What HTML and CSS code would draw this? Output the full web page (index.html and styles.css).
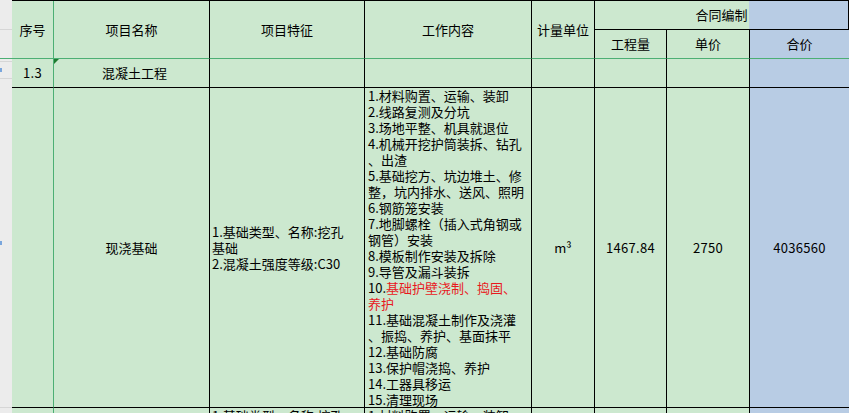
FILE: index.html
```html
<!DOCTYPE html>
<html lang="zh-CN">
<head>
<meta charset="utf-8">
<title>清单</title>
<link rel="stylesheet" href="styles.css">
</head>
<body>
<div class="page">
  <div class="strip">
    <div class="seg s1"></div>
    <div class="seg s2"></div>
    <div class="seg s3"></div>
    <div class="seg s4"><span class="tick"></span></div>
    <div class="seg s5"><span class="tick"></span></div>
    <div class="seg s6"></div>
  </div>
  <div class="sheet">
    <div class="c h1 col1 freeze-b">序号</div>
    <div class="c h1">项目名称</div>
    <div class="c h1">项目特征</div>
    <div class="c h1">工作内容</div>
    <div class="c h1">计量单位</div>
    <div class="c merged">合同编制</div>
    <div class="c h2">工程量</div>
    <div class="c h2">单价</div>
    <div class="c h2 blue last">合价</div>

    <div class="c col1 num">1.3</div>
    <div class="c name flag">混凝土工程</div>
    <div class="c"></div>
    <div class="c"></div>
    <div class="c"></div>
    <div class="c"></div>
    <div class="c"></div>
    <div class="c blue last"></div>

    <div class="c col1"></div>
    <div class="c">现浇基础</div>
    <div class="c left">
      <div class="lines">
        <div>1.基础类型、名称:挖孔</div>
        <div>基础</div>
        <div>2.混凝土强度等级:C30</div>
      </div>
    </div>
    <div class="c left work">
      <div class="lines">
        <div>1.材料购置、运输、装卸</div>
        <div>2.线路复测及分坑</div>
        <div>3.场地平整、机具就退位</div>
        <div>4.机械开挖护筒装拆、钻孔</div>
        <div>、出渣</div>
        <div>5.基础挖方、坑边堆土、修</div>
        <div>整，坑内排水、送风、照明</div>
        <div>6.钢筋笼安装</div>
        <div>7.地脚螺栓（插入式角钢或</div>
        <div>钢管）安装</div>
        <div>8.模板制作安装及拆除</div>
        <div>9.导管及漏斗装拆</div>
        <div>10.<span class="red">基础护壁浇制、捣固、</span></div>
        <div class="red">养护</div>
        <div>11.基础混凝土制作及浇灌</div>
        <div>、振捣、养护、基面抹平</div>
        <div>12.基础防腐</div>
        <div>13.保护帽浇捣、养护</div>
        <div>14.工器具移运</div>
        <div>15.清理现场</div>
      </div>
    </div>
    <div class="c">m³</div>
    <div class="c num">1467.84</div>
    <div class="c num">2750</div>
    <div class="c num blue last">4036560</div>

    <div class="c col1"></div>
    <div class="c"></div>
    <div class="c left top"><div class="lines"><div>1.基础类型、名称:挖孔</div></div></div>
    <div class="c left top work"><div class="lines"><div>1.材料购置、运输、装卸</div></div></div>
    <div class="c"></div>
    <div class="c"></div>
    <div class="c"></div>
    <div class="c blue last"></div>
  </div>
</div>
</body>
</html>
```

FILE: styles.css
```css
html, body {
  margin: 0;
  padding: 0;
  width: 849px;
  height: 413px;
  overflow: hidden;
  background: #cce8cf;
}

.page {
  display: flex;
  width: 849px;
  height: 413px;
  font-family: "Noto Sans CJK SC", "Noto Sans", sans-serif;
  font-size: 13px;
  color: #000;
}

.strip {
  width: 12px;
  flex: none;
  background: #ececec;
  display: flex;
  flex-direction: column;
}

.seg {
  box-sizing: border-box;
  border-bottom: 1px solid #d6d6d6;
  display: flex;
  align-items: center;
}
.s1 { height: 30px; }
.s2 { height: 29px; border-bottom-color: #4caf74; }
.s3 { height: 3px; }
.s4 { height: 17px; }
.s5 { height: 329px; }
.s6 { flex: 1; border-bottom: none; }

.tick {
  display: block;
  width: 2px;
  height: 4px;
  background: #7aa6dc;
}

.sheet {
  flex: none;
  display: grid;
  grid-template-columns: 42px 156px 155px 167px 63px 72px 83px 99px;
  grid-template-rows: 29px 29px 29px 320px 40px;
  border-top: 1px solid #000;
  background: #cce8cf;
}

.c {
  box-sizing: border-box;
  border-right: 1px solid #000;
  border-bottom: 1px solid #000;
  display: flex;
  align-items: center;
  justify-content: center;
  white-space: nowrap;
  overflow: hidden;
  position: relative;
  line-height: 16px;
}

.h1 {
  grid-row: span 2;
  border-bottom-color: #4caf74;
}

.h2 {
  border-bottom-color: #4caf74;
}

.merged {
  grid-column: span 3;
  background: linear-gradient(to right, #cce8cf 0, #cce8cf 154px, #b8cce4 154px);
}

.col1 {
  border-right-color: #4caf74;
}

.blue {
  background: #b8cce4;
}

.last {
  border-right: none;
}

.num {
  letter-spacing: 0.3px;
}

.name {
  padding-left: 6px;
}

.flag::before {
  content: "";
  position: absolute;
  top: 0;
  left: 0;
  border-top: 5px solid #1d7a2e;
  border-right: 5px solid transparent;
}

.left {
  justify-content: flex-start;
  padding-left: 2px;
}

.work {
  padding-left: 3px;
}

.top {
  align-items: flex-start;
}

.lines {
  display: flex;
  flex-direction: column;
}

.red {
  color: #e8191d;
}
```
